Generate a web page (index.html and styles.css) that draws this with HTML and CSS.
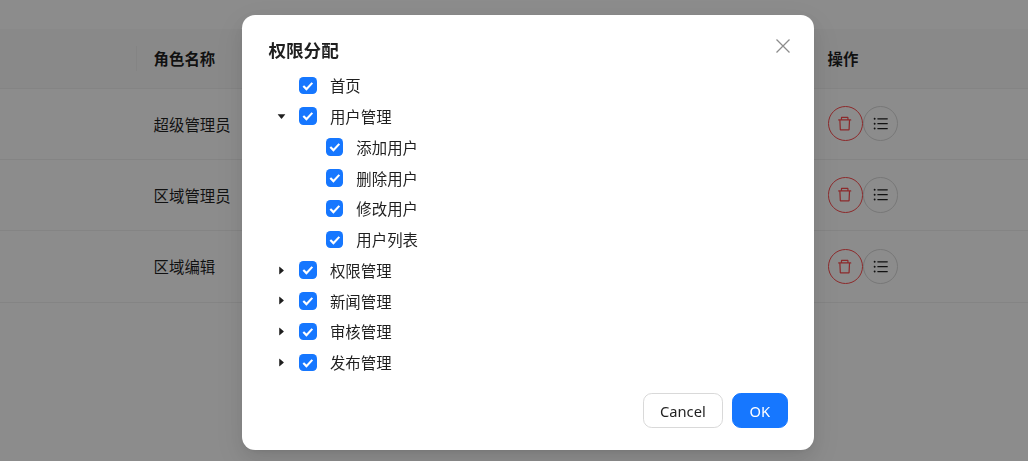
FILE: index.html
```html
<!DOCTYPE html>
<html lang="zh-CN">
<head>
  <meta charset="UTF-8">
  <title>权限分配</title>
  <link rel="stylesheet" href="styles.css">
</head>
<body>

  <svg class="sprites" width="0" height="0">
    <symbol id="icon-delete" viewBox="64 64 896 896"><path d="M360 184h-8c4.4 0 8-3.6 8-8v8h304v-8c0 4.4 3.6 8 8 8h-8v72h72v-80c0-35.3-28.7-64-64-64H352c-35.3 0-64 28.7-64 64v80h72v-72zm504 72H160c-17.7 0-32 14.3-32 32v32c0 4.4 3.6 8 8 8h60.4l24.7 523c1.6 34.1 29.8 61 63.9 61h454c34.2 0 62.3-26.8 63.9-61l24.7-523H888c4.4 0 8-3.6 8-8v-32c0-17.7-14.3-32-32-32zM731.3 840H292.7l-24.2-512h487l-24.2 512z"/></symbol>
    <symbol id="icon-list" viewBox="64 64 896 896"><path d="M912 192H328c-4.4 0-8 3.6-8 8v56c0 4.4 3.6 8 8 8h584c4.4 0 8-3.6 8-8v-56c0-4.4-3.6-8-8-8zm0 284H328c-4.4 0-8 3.6-8 8v56c0 4.4 3.6 8 8 8h584c4.4 0 8-3.6 8-8v-56c0-4.4-3.6-8-8-8zm0 284H328c-4.4 0-8 3.6-8 8v56c0 4.4 3.6 8 8 8h584c4.4 0 8-3.6 8-8v-56c0-4.4-3.6-8-8-8zM104 228a56 56 0 1 0 112 0 56 56 0 1 0-112 0zm0 284a56 56 0 1 0 112 0 56 56 0 1 0-112 0zm0 284a56 56 0 1 0 112 0 56 56 0 1 0-112 0z"/></symbol>
    <symbol id="icon-caret" viewBox="0 0 1024 1024"><path d="M840.4 300H183.6c-19.7 0-30.7 20.8-18.5 35l328.4 380.8c9.4 10.9 27.5 10.9 37 0L858.9 335c12.2-14.2 1.2-35-18.5-35z"/></symbol>
    <symbol id="icon-check" viewBox="0 0 18 18"><path d="M4.4 9.2l3.2 3.2 6-6.4" fill="none" stroke="#fff" stroke-width="2.2"/></symbol>
  </svg>

  <!-- table behind the modal -->
  <table class="role-table">
    <thead>
      <tr>
        <th class="col-id"></th>
        <th class="col-name"><span class="th-sep"></span>角色名称</th>
        <th class="col-action">操作</th>
      </tr>
    </thead>
    <tbody>
      <tr>
        <td></td>
        <td>超级管理员</td>
        <td>
          <div class="actions">
            <button class="round-button danger"><svg class="icon"><use href="#icon-delete"/></svg></button>
            <button class="round-button"><svg class="icon"><use href="#icon-list"/></svg></button>
          </div>
        </td>
      </tr>
      <tr>
        <td></td>
        <td>区域管理员</td>
        <td>
          <div class="actions">
            <button class="round-button danger"><svg class="icon"><use href="#icon-delete"/></svg></button>
            <button class="round-button"><svg class="icon"><use href="#icon-list"/></svg></button>
          </div>
        </td>
      </tr>
      <tr>
        <td></td>
        <td>区域编辑</td>
        <td>
          <div class="actions">
            <button class="round-button danger"><svg class="icon"><use href="#icon-delete"/></svg></button>
            <button class="round-button"><svg class="icon"><use href="#icon-list"/></svg></button>
          </div>
        </td>
      </tr>
    </tbody>
  </table>

  <!-- modal -->
  <div class="mask">
    <div class="modal">
      <button class="modal-close" aria-label="Close">
        <svg viewBox="0 0 14 14" width="14" height="14"><path d="M0.5 0.5l13 13M13.5 0.5l-13 13" fill="none" stroke="currentColor" stroke-width="1.3"/></svg>
      </button>
      <div class="modal-title">权限分配</div>

      <div class="tree">
        <div class="tree-row">
          <span class="switcher"></span>
          <span class="checkbox"><svg><use href="#icon-check"/></svg></span>
          <span class="tree-title">首页</span>
        </div>
        <div class="tree-row">
          <span class="switcher"><svg class="caret"><use href="#icon-caret"/></svg></span>
          <span class="checkbox"><svg><use href="#icon-check"/></svg></span>
          <span class="tree-title">用户管理</span>
        </div>
        <div class="tree-row child">
          <span class="switcher"></span>
          <span class="checkbox"><svg><use href="#icon-check"/></svg></span>
          <span class="tree-title">添加用户</span>
        </div>
        <div class="tree-row child">
          <span class="switcher"></span>
          <span class="checkbox"><svg><use href="#icon-check"/></svg></span>
          <span class="tree-title">删除用户</span>
        </div>
        <div class="tree-row child">
          <span class="switcher"></span>
          <span class="checkbox"><svg><use href="#icon-check"/></svg></span>
          <span class="tree-title">修改用户</span>
        </div>
        <div class="tree-row child">
          <span class="switcher"></span>
          <span class="checkbox"><svg><use href="#icon-check"/></svg></span>
          <span class="tree-title">用户列表</span>
        </div>
        <div class="tree-row">
          <span class="switcher"><svg class="caret closed"><use href="#icon-caret"/></svg></span>
          <span class="checkbox"><svg><use href="#icon-check"/></svg></span>
          <span class="tree-title">权限管理</span>
        </div>
        <div class="tree-row">
          <span class="switcher"><svg class="caret closed"><use href="#icon-caret"/></svg></span>
          <span class="checkbox"><svg><use href="#icon-check"/></svg></span>
          <span class="tree-title">新闻管理</span>
        </div>
        <div class="tree-row">
          <span class="switcher"><svg class="caret closed"><use href="#icon-caret"/></svg></span>
          <span class="checkbox"><svg><use href="#icon-check"/></svg></span>
          <span class="tree-title">审核管理</span>
        </div>
        <div class="tree-row">
          <span class="switcher"><svg class="caret closed"><use href="#icon-caret"/></svg></span>
          <span class="checkbox"><svg><use href="#icon-check"/></svg></span>
          <span class="tree-title">发布管理</span>
        </div>
      </div>

      <div class="modal-footer">
        <button class="footer-button">Cancel</button>
        <button class="footer-button primary">OK</button>
      </div>
    </div>
  </div>

</body>
</html>
```

FILE: styles.css
```css
html, body {
  height: 100%;
}

body {
  margin: 0;
  padding-top: 29px;
  box-sizing: border-box;
  overflow: hidden;
  background-color: #ffffff;
  color: rgba(0,0,0,0.88);
  font-family: "Noto Sans CJK SC", "Noto Sans", sans-serif;
  font-size: 15.4px;
  line-height: 1.57;
}

.sprites {
  display: block;
}

/* table */
.role-table {
  width: 100%;
  border-collapse: collapse;
  table-layout: fixed;
}

.col-id {
  width: 136px;
}

.col-action {
  width: 218px;
}

.role-table th {
  position: relative;
  height: 59px;
  padding: 0 17.6px;
  box-sizing: border-box;
  background-color: #fafafa;
  border-bottom: 1px solid #f0f0f0;
  text-align: left;
  font-weight: 600;
}

.th-sep {
  position: absolute;
  left: 0;
  top: 17px;
  height: 25px;
  width: 1px;
  background-color: #f0f0f0;
}

.role-table td {
  height: 71.4px;
  padding: 0 17.6px;
  box-sizing: border-box;
  border-bottom: 1px solid #f0f0f0;
}

.actions {
  display: flex;
}

.round-button {
  display: flex;
  align-items: center;
  justify-content: center;
  width: 35.2px;
  height: 35.2px;
  padding: 0;
  background: #ffffff;
  border: 1px solid #d9d9d9;
  border-radius: 50%;
  color: rgba(0,0,0,0.88);
}

.round-button.danger {
  border-color: #ff4d4f;
  color: #ff4d4f;
}

.icon {
  width: 15.4px;
  height: 15.4px;
  fill: currentColor;
}

/* modal */
.mask {
  position: fixed;
  top: 0;
  left: 0;
  right: 0;
  bottom: 0;
  display: flex;
  justify-content: center;
  align-items: flex-start;
  padding: 15px 0 0 28px;
  background-color: rgba(0,0,0,0.45);
}

.modal {
  position: relative;
  width: 572px;
  padding: 22px 26.4px;
  box-sizing: border-box;
  background-color: #ffffff;
  border-radius: 13.2px;
  box-shadow: 0 6.6px 17.6px 0 rgba(0,0,0,0.08), 0 3.3px 6.6px -4.4px rgba(0,0,0,0.12), 0 9.9px 30.8px 8.8px rgba(0,0,0,0.05);
}

.modal-close {
  position: absolute;
  top: 24px;
  right: 24px;
  display: flex;
  padding: 0;
  background: none;
  border: none;
  color: rgba(0,0,0,0.45);
}

.modal-title {
  margin-bottom: 8.8px;
  font-size: 17.6px;
  font-weight: 700;
  line-height: 26.4px;
}

.tree-row {
  display: flex;
  align-items: center;
  height: 26.4px;
  padding-bottom: 4.4px;
}

.tree-row.child {
  padding-left: 26.4px;
}

.switcher {
  display: flex;
  align-items: center;
  justify-content: center;
  flex: none;
  width: 26.4px;
  height: 26.4px;
}

.caret {
  width: 11px;
  height: 11px;
  fill: rgba(0,0,0,0.88);
}

.caret.closed {
  transform: rotate(-90deg);
}

.checkbox {
  display: block;
  flex: none;
  width: 17.6px;
  height: 17.6px;
  margin-left: 4.4px;
  margin-right: 8.8px;
  background-color: #1677ff;
  border-radius: 4.4px;
}

.checkbox svg {
  display: block;
  width: 17.6px;
  height: 17.6px;
}

.tree-title {
  padding: 0 4.4px;
  line-height: 26.4px;
}

.modal-footer {
  display: flex;
  justify-content: flex-end;
  gap: 8.8px;
  margin-top: 13.2px;
}

.footer-button {
  height: 35.2px;
  padding: 0 16.5px;
  background-color: #ffffff;
  border: 1px solid #d9d9d9;
  border-radius: 8.8px;
  color: rgba(0,0,0,0.88);
  font-family: "Noto Sans", sans-serif;
  font-size: 14.7px;
}

.footer-button.primary {
  background-color: #1677ff;
  border-color: #1677ff;
  color: #ffffff;
}
```
